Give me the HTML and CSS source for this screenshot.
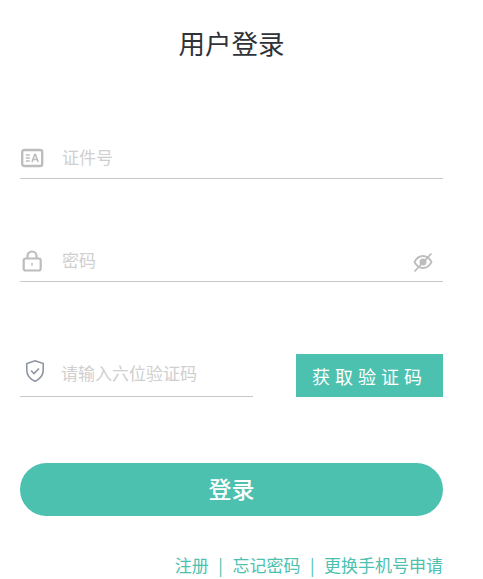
FILE: index.html
```html
<!DOCTYPE html>
<html lang="zh">
<head>
<meta charset="utf-8">
<title>用户登录</title>
<link rel="stylesheet" href="styles.css">
</head>
<body>
<main class="page">
  <h1 class="title">用户登录</h1>
  <div class="field field-id">
    <svg class="icon" width="24" height="20" viewBox="0 0 24 20" fill="none" stroke="#bdbdbd"><rect x="2.200" y="2" width="20" height="16" rx="2" stroke-width="2.400"/><path d="M5.800 7h4M5.800 10h4M5.800 13h4" stroke-width="1.400"/><path d="M12 14l2.700-7.500h.8L18.200 14M13 11.500h4.200" stroke-width="1.600"/></svg>
    <span class="placeholder">证件号</span>
  </div>
  <div class="field field-pass">
    <svg class="icon" width="24" height="24" viewBox="0 0 24 24" fill="none" stroke="#bdbdbd" stroke-width="2.200"><path d="M7.500 9.500V7a4.500 4.500 0 0 1 9 0v2.500"/><rect x="3.700" y="9.500" width="17" height="12" rx="2"/><path d="M12 14v2.500" stroke-width="1.600"/></svg>
    <span class="placeholder">密码</span>
    <svg class="eye" width="22" height="22" viewBox="0 0 22 22" fill="none" stroke="#bdbdbd" stroke-width="1.800"><path d="M2.500 11c2-3.800 5-6 8.500-6s6.500 2.200 8.500 6c-2 3.800-5 6-8.500 6s-6.500-2.200-8.500-6z"/><circle cx="11" cy="11" r="3.500" fill="#bdbdbd" stroke="none"/><path d="M2.500 20.500L19.500 2.500"/></svg>
  </div>
  <div class="code-row">
    <div class="field field-code">
      <svg class="icon-shield" width="22" height="24" viewBox="0 0 22 24" fill="none" stroke="#8f95a1" stroke-width="1.600"><path d="M11 1.800l8.200 2.800v6.600c0 5-3.400 8.800-8.200 11-4.800-2.200-8.200-6-8.200-11V4.600z"/><path d="M7 11.500l3 3 5-5"/></svg>
      <span class="placeholder">请输入六位验证码</span>
    </div>
    <button class="code-btn" type="button">获取验证码</button>
  </div>
  <button class="login-btn" type="button">登录</button>
  <nav class="links"><a>注册</a><span class="sep">|</span><a>忘记密码</a><span class="sep">|</span><a>更换手机号申请</a></nav>
</main>
</body>
</html>
```
FILE: styles.css
```css
* { box-sizing: border-box; }
html, body { margin: 0; padding: 0; background: #fff; overflow: hidden; }
body { font-family: "Noto Sans CJK SC", "Liberation Sans", sans-serif; }
.page { width: 463px; height: 579px; padding: 0 20px; }
.title { margin: 0; padding-top: 24px; height: 138px; font-size: 26.500px; line-height: 38px; font-weight: 400; color: #2f3338; text-align: center; }
.field { display: flex; align-items: center; border-bottom: 1px solid #c8c8c8; }
.field-id { height: 41px; }
.field-pass { height: 41px; margin-top: 62px; }
.icon { flex: none; margin-right: 18px; }
.placeholder { font-size: 17px; line-height: 24px; color: #cfcfcf; margin-bottom: 3px; }
.eye { margin: 2px 9px 0 auto; }
.code-row { display: flex; justify-content: space-between; align-items: flex-end; margin-top: 72px; }
.field-code { width: 233px; height: 43px; padding: 0 0 4px 4px; }
.icon-shield { flex: none; margin: 0 15px 4px 0; }
.field-code .placeholder { margin-bottom: 0; }
.code-btn { width: 147px; height: 43px; border: 0; background: #4dc1af; color: #fff; font: 400 18px "Noto Sans CJK SC", sans-serif; letter-spacing: 5px; padding: 0; }
.login-btn { display: block; width: 100%; height: 53px; margin-top: 66px; border: 0; border-radius: 27px; background: #4dc1af; color: #fff; font: 500 23px "Noto Sans CJK SC", sans-serif; padding: 0 0 4px; }
.links { display: flex; justify-content: flex-end; align-items: center; margin-top: 37px; font-size: 17px; line-height: 24px; color: #4dc1af; white-space: nowrap; }
.sep { margin: 0 9.500px; }
```
